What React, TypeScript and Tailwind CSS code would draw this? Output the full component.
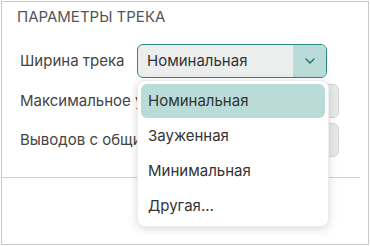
import React from 'react';

const options = ['Номинальная', 'Зауженная', 'Минимальная', 'Другая...'];

const ChevronIcon: React.FC = () => (
    <svg width="10" height="6" viewBox="0 0 10 6" fill="none">
        <path d="M1 1l4 4 4-4" stroke="#1f6f6b" strokeWidth="1.4" strokeLinecap="round" strokeLinejoin="round" />
    </svg>
);

const App: React.FC = () => {
    return (
        <div className="w-[370px] h-[246px] bg-white p-px" style={{ fontFamily: 'Inter, "Noto Sans", sans-serif' }}>
            <div className="relative h-[244px] w-[368px] border border-[#c8c8c8] bg-white">
                <h3 className="pl-[15px] pt-[7px] text-[15px] leading-[16px] text-[#555] uppercase">Параметры трека</h3>

                <div className="flex flex-col gap-[5px] pl-[18px] pr-[29px] pt-[19px]">
                    <div className="flex items-center h-[34px]">
                        <span className="w-[117px] text-[15px] text-[#444] whitespace-nowrap">Ширина трека</span>
                        <div className="flex h-[34px] w-[190px] rounded-[6px] border border-[#2a8a86] bg-[#eceeed] overflow-hidden">
                            <span className="flex-1 flex items-center pl-[9px] text-[15px] text-[#333]">Номинальная</span>
                            <span className="flex items-center justify-center w-[33px] bg-[#b9dcd9]">
                                <ChevronIcon />
                            </span>
                        </div>
                    </div>
                    <div className="flex items-center h-[34px] mt-[1px]">
                        <span className="w-[117px] text-[15px] text-[#444] whitespace-nowrap">Максимальное усилие</span>
                        <div className="ml-auto h-[34px] w-[120px] rounded-[6px] border border-[#d2d6d6] bg-[#e8e9e9]" />
                    </div>
                    <div className="flex items-center h-[34px]">
                        <span className="w-[117px] text-[15px] text-[#444] whitespace-nowrap">Выводов с общим</span>
                        <div className="ml-auto h-[34px] w-[120px] rounded-[6px] border border-[#d2d6d6] bg-[#e8e9e9]" />
                    </div>
                </div>

                <div className="mt-[20px] mr-[8px] h-px bg-[#c9d3d3]" />

                <div className="absolute left-[135px] top-[78px] w-[192px] rounded-[8px] bg-white p-[3px] shadow-[0_2px_10px_rgba(0,0,0,0.15)] border border-[#ececec]">
                    {options.map((opt, i) => (
                        <div
                            key={opt}
                            className={`flex items-center h-[34px] pl-[7px] rounded-[6px] text-[15px] text-[#333] ${i === 0 ? 'bg-[#b9dcd9]' : ''} ${i > 0 ? 'mt-px' : ''}`}
                        >
                            {opt}
                        </div>
                    ))}
                </div>
            </div>
        </div>
    );
};

export default App;
